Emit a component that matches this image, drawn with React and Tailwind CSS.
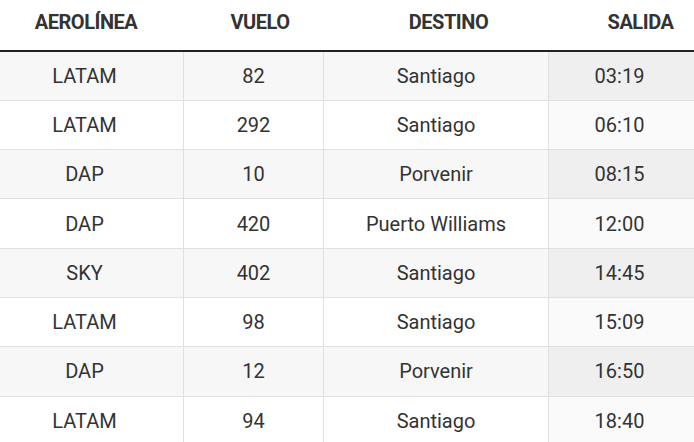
const rows = [
  ["LATAM", "82", "Santiago", "03:19"],
  ["LATAM", "292", "Santiago", "06:10"],
  ["DAP", "10", "Porvenir", "08:15"],
  ["DAP", "420", "Puerto Williams", "12:00"],
  ["SKY", "402", "Santiago", "14:45"],
  ["LATAM", "98", "Santiago", "15:09"],
  ["DAP", "12", "Porvenir", "16:50"],
  ["LATAM", "94", "Santiago", "18:40"],
];

export default function App() {
  return (
    <div className="h-[442px] w-[694px] overflow-hidden bg-white text-[#333]" style={{ fontFamily: "Roboto, 'Liberation Sans', sans-serif" }}>
      <div className="grid h-[51.5px] grid-cols-[184px_140px_225px_145px] items-center border-b-2 border-[#222] pb-[5px] text-[20px] font-bold tracking-[-0.45px] text-[#333]">
        <div className="pr-[12px] text-center">AEROLÍNEA</div>
        <div className="pl-[12px] text-center">VUELO</div>
        <div className="pl-[24px] text-center">DESTINO</div>
        <div className="pl-[38px] text-center">SALIDA</div>
      </div>
      {rows.map((r, i) => {
        const odd = i % 2 === 0;
        return (
          <div key={i} className={`grid h-[49.3px] grid-cols-[184px_140px_225px_145px] border-b border-[#e0e0e0] text-[20px] ${odd ? "bg-[#f7f7f7]" : "bg-white"}`}>
            <div className="flex items-center justify-center border-r border-[#e0e0e0] pr-[14px]">{r[0]}</div>
            <div className="flex items-center justify-center border-r border-[#e0e0e0]">{r[1]}</div>
            <div className="flex items-center justify-center border-r border-[#e0e0e0]">{r[2]}</div>
            <div className={`flex items-center justify-center pr-[4px] ${odd ? "bg-[#efefef]" : "bg-[#fafafa]"}`}>{r[3]}</div>
          </div>
        );
      })}
    </div>
  );
}
